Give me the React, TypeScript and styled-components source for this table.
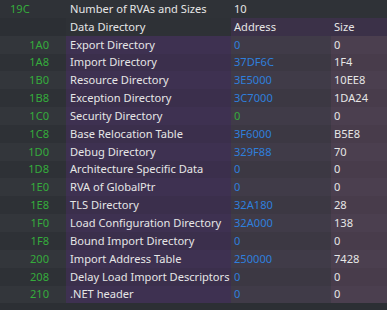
import React from 'react';
import styled, { createGlobalStyle } from 'styled-components';

const Global = createGlobalStyle`
    html, body {
        margin:0;
        padding:0;
        background:#2c2f34;
    }
    body {
        font-family: "Noto Sans", "Open Sans", sans-serif;
        font-size:11.1px;
        color:#e6e6e6;
    }
`;

const Table = styled.div`
    display:grid;
    grid-template-columns: 66px 165px 100px 1fr;
    grid-auto-rows: 17.85px;
    width:387px;
`;

const Cell = styled.div<{ $bg: string; $pad?: number; $right?: boolean; $color?: string }>`
    display:flex;
    align-items:center;
    justify-content:${p => p.$right ? 'flex-end' : 'flex-start'};
    background:${p => p.$bg};
    color:${p => p.$color || '#e6e6e6'};
    padding:${p => p.$right ? `0 ${p.$pad ?? 0}px 0 0` : `0 0 0 ${p.$pad ?? 0}px`};
    white-space:nowrap;
    line-height:1;
    padding-bottom:1px;
    box-sizing:border-box;
`;

const GREEN = '#35ac3c';
const BLUE = '#2f7fdc';

type Entry = { off: string; name: string; addr: string; size: string; addrGreen?: boolean };

const entries: Entry[] = [
    { off: '1A0', name: 'Export Directory', addr: '0', size: '0' },
    { off: '1A8', name: 'Import Directory', addr: '37DF6C', size: '1F4' },
    { off: '1B0', name: 'Resource Directory', addr: '3E5000', size: '10EE8' },
    { off: '1B8', name: 'Exception Directory', addr: '3C7000', size: '1DA24' },
    { off: '1C0', name: 'Security Directory', addr: '0', size: '0', addrGreen: true },
    { off: '1C8', name: 'Base Relocation Table', addr: '3F6000', size: 'B5E8' },
    { off: '1D0', name: 'Debug Directory', addr: '329F88', size: '70' },
    { off: '1D8', name: 'Architecture Specific Data', addr: '0', size: '0' },
    { off: '1E0', name: 'RVA of GlobalPtr', addr: '0', size: '0' },
    { off: '1E8', name: 'TLS Directory', addr: '32A180', size: '28' },
    { off: '1F0', name: 'Load Configuration Directory', addr: '32A000', size: '138' },
    { off: '1F8', name: 'Bound Import Directory', addr: '0', size: '0' },
    { off: '200', name: 'Import Address Table', addr: '250000', size: '7428' },
    { off: '208', name: 'Delay Load Import Descriptors', addr: '0', size: '0' },
    { off: '210', name: '.NET header', addr: '0', size: '0' },
];

const shades = {
    off: ['#33363b', '#2e3136'],
    name: ['#3e3151', '#3b2f4c'],
    addr: ['#403b48', '#3c3843'],
    size: ['#4b3f4f', '#483c4b'],
};

const App = () => {
    return (
        <>
            <Global />
            <Table>
                <Cell $bg="#2f3237" $pad={10} $color={GREEN}>19C</Cell>
                <Cell $bg="#2f3237" $pad={4}>Number of RVAs and Sizes</Cell>
                <Cell $bg="#2f3237" $pad={3}>10</Cell>
                <Cell $bg="#2f3237" />

                <Cell $bg="#2c2f34" />
                <Cell $bg="#2e3136" $pad={4}>Data Directory</Cell>
                <Cell $bg="#3b3148" $pad={3}>Address</Cell>
                <Cell $bg="#3b3148" $pad={3}>Size</Cell>

                {entries.map((e, i) => {
                    const k = i % 2;
                    return (
                        <React.Fragment key={e.off}>
                            <Cell $bg={shades.off[k]} $right $pad={17} $color={GREEN}>{e.off}</Cell>
                            <Cell $bg={shades.name[k]} $pad={4}>{e.name}</Cell>
                            <Cell $bg={shades.addr[k]} $pad={3} $color={e.addrGreen ? GREEN : BLUE}>{e.addr}</Cell>
                            <Cell $bg={shades.size[k]} $pad={3}>{e.size}</Cell>
                        </React.Fragment>
                    );
                })}
            </Table>
        </>
    );
};

export default App;
